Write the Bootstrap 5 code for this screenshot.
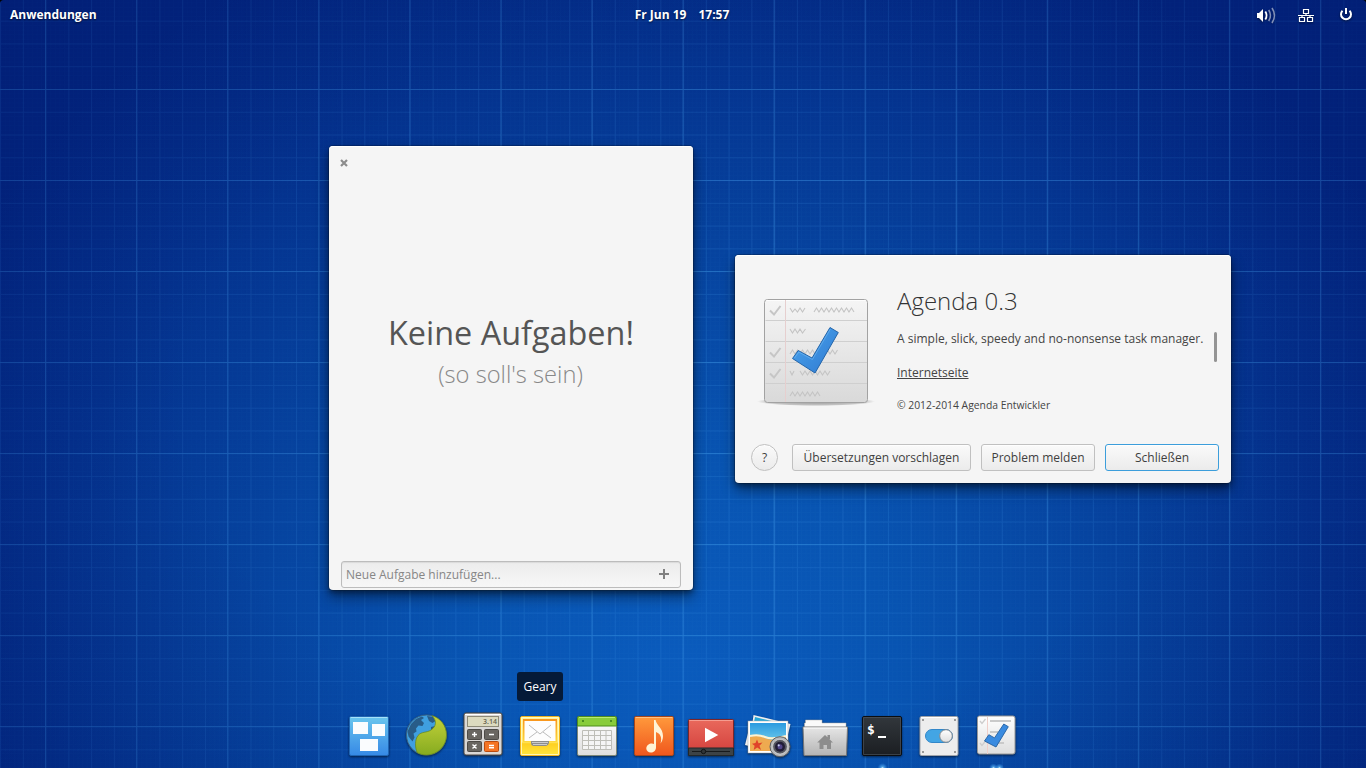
<!DOCTYPE html>
<html lang="de">
<head>
<meta charset="utf-8">
<meta name="viewport" content="width=device-width, initial-scale=1">
<title>Agenda</title>
<link rel="stylesheet" href="https://cdn.jsdelivr.net/npm/bootstrap@5.3.0/dist/css/bootstrap.min.css">
<style>
body{font-family:"Open Sans","Noto Sans",sans-serif;font-size:12px;line-height:16px;color:#444;background:#000}
.desktop{width:1366px;height:768px;border-radius:4px 4px 0 0;background:
 radial-gradient(ellipse 840px 800px at 685px 665px,#0a5bbd 0%,#0854b2 25%,#06439f 52%,#04318d 78%,#022681 100%)}
.desktop::before{content:"";position:absolute;inset:0;border-radius:4px 4px 0 0;background:
 radial-gradient(ellipse 900px 620px at 50% 52%,transparent 55%,rgba(0,8,85,.38) 125%)}
.wallgrid{position:absolute;inset:0;width:1366px;height:768px;-webkit-mask-image:radial-gradient(ellipse 760px 620px at 760px 420px,#000 20%,rgba(0,0,0,.55) 100%);mask-image:radial-gradient(ellipse 760px 620px at 760px 420px,#000 20%,rgba(0,0,0,.55) 100%)}
.topbar{height:30px;padding:0 10px;color:#fff;font-weight:700;text-shadow:0 1px 2px rgba(0,0,0,.6)}
.topbar svg{filter:drop-shadow(0 1px 1px rgba(0,0,0,.5))}
.side{flex:1 1 0}
.clock{margin-right:2px}
.win{position:absolute;background:#f5f5f5;border-radius:4px;box-shadow:0 0 0 1px rgba(0,0,0,.2),0 3px 5px rgba(0,0,0,.32),0 7px 14px rgba(0,0,0,.42),inset 0 1px #fff}
.tasks{left:329px;top:146px;width:364px;height:444px}
.about{left:735px;top:255px;width:496px;height:228px}
.closer{padding:13px 0 0 11px;height:30px;line-height:0}
.empty-state{padding-bottom:38px}
.empty-title{font-size:32.4px;line-height:46px;color:#555}
.empty-sub{font-size:23.7px;line-height:33px;font-weight:300;color:#888;margin-top:3px;margin-right:1px}
.entry{margin:0 12px 2px;height:27px;padding:0 11px 0 4px;border:1px solid #bcbcbc;border-radius:3px;background:linear-gradient(#ececec,#f7f7f7);box-shadow:inset 0 1px 1px rgba(0,0,0,.08);color:#868686}
.entry svg{margin-bottom:2px}
.app-name{font-size:24px;line-height:33px;font-weight:300;color:#333}
.details{padding:29px 0 0 14px}
.summary{margin-top:14px}
.site{margin-top:18px}
.copy{margin-top:17px;font-size:10.35px;line-height:14px}
.thumb{width:3px;height:30px;background:#949494;border-radius:2px;margin:77px 0 0 11px}
.actions{gap:10px;padding:0 12px 12px 16px}
.gbtn{height:27px;border:1px solid #c0c0c0;border-radius:3px;background:linear-gradient(#fafafa,#ebebeb);color:#3f3f3f;font-size:12px;line-height:16px;padding:0;white-space:nowrap;box-shadow:inset 0 1px rgba(255,255,255,.7)}
.gbtn.focused{border-color:#3c9edb}
.help{width:27px;border-radius:50%}
.w-tr{width:179px}.w-mid{width:114px}
.dock{height:68px}
.dock svg{width:57px;height:68px;display:block}
.tip{position:absolute;left:517px;top:672px;width:46px;height:29px;border-radius:3px;background:#051a38;color:#fff}
</style>
</head>
<body class="m-0 overflow-hidden">
<div class="desktop position-relative d-flex flex-column overflow-hidden">
<svg class="wallgrid" aria-hidden="true">
 <defs>
  <pattern id="fine" width="4.55" height="4.55" patternUnits="userSpaceOnUse" x="0.2" y="2.4"><path d="M.5 0V4.55M0 .5H4.55" stroke="#4aa0f0" stroke-opacity=".035" fill="none"/></pattern>
  <pattern id="mid" width="22.77" height="22.77" patternUnits="userSpaceOnUse" x="0" y="20.7"><path d="M.5 0V22.8M0 .5H22.8" stroke="#4aa5f5" stroke-opacity=".15" fill="none"/></pattern>
  <pattern id="major" width="91.07" height="91" patternUnits="userSpaceOnUse" x="45" y="89"><path d="M.5 0V91M0 .5H91.1" stroke="#4aa8f5" stroke-opacity=".32" fill="none"/></pattern>
 </defs>
 <path fill="url(#fine)" d="M0 0h1366v768H0z"/><path fill="url(#mid)" d="M0 0h1366v768H0z"/><path fill="url(#major)" d="M0 0h1366v768H0z"/>
</svg>

<header class="topbar position-relative d-flex align-items-center">
 <div class="side">Anwendungen</div>
 <div class="clock d-flex gap-2"><span class="me-1">Fr Jun 19</span><span>17:57</span></div>
 <div class="side d-flex justify-content-end align-items-center">
  <svg width="110" height="30" viewBox="1246 0 110 30" fill="none">
   <path d="M1257 13h2l4-4v13l-4-4h-2z" fill="#fff"/>
   <path d="M1265.300 11.500q2.600 4 0 8" stroke="#fff" stroke-width="1.800"/>
   <path d="M1268.700 10q3.500 5.500 0 11M1272 8q5 7.500 0 15" stroke="#fff" stroke-opacity=".5" stroke-width="1.600"/>
   <path d="M1303.500 9.500h5v4h-5zM1299.500 17.500h5v4h-5zM1307.500 17.500h5v4h-5zM1306 14v1.500M1302 17v-1M1310 17v-1M1298 15.500h16" stroke="#fff" stroke-width="1.200"/>
   <path d="M1342.500 10.700a5 5 0 1 0 7 0" stroke="#fff" stroke-width="2"/><path d="M1346 8v6" stroke="#fff" stroke-width="2"/>
  </svg>
 </div>
</header>

<main class="flex-grow-1">
<section class="win tasks d-flex flex-column">
 <div class="closer"><svg width="8" height="8" viewBox="0 0 8 8"><path d="M1 1l6 6M7 1L1 7" stroke="#8c8c8c" stroke-width="2.200"/></svg></div>
 <div class="empty-state flex-grow-1 d-flex flex-column align-items-center justify-content-center">
  <div class="empty-title text-nowrap">Keine Aufgaben!</div>
  <div class="empty-sub text-nowrap">(so soll's sein)</div>
 </div>
 <div class="entry d-flex align-items-center justify-content-between"><span>Neue Aufgabe hinzufügen...</span>
  <svg width="10" height="10" viewBox="0 0 10 10"><path d="M5 0v10M0 5h10" stroke="#808080" stroke-width="2"/></svg></div>
</section>

<section class="win about d-flex flex-column">
 <div class="d-flex flex-grow-1 align-items-start">
  <svg width="148" height="185" viewBox="735 255 148 185">
   <defs><linearGradient id="paper" x2="0" y2="1"><stop stop-color="#f5f5f5"/><stop offset="1" stop-color="#d9d9d9"/></linearGradient>
   <linearGradient id="chk" x1="0" y1="0" x2="1" y2="1"><stop stop-color="#4ba7f0"/><stop offset="1" stop-color="#2f78cf"/></linearGradient>
   <radialGradient id="shade"><stop stop-color="#000" stop-opacity=".4"/><stop offset=".8" stop-color="#000" stop-opacity=".2"/><stop offset="1" stop-color="#000" stop-opacity="0"/></radialGradient></defs>
   <ellipse cx="816" cy="401.500" rx="59" ry="4.500" fill="url(#shade)"/>
   <rect x="764.500" y="299.500" width="103" height="103" rx="3" fill="url(#paper)" stroke="#a2a2a2"/>
   <path d="M766 300.500h100" stroke="#fff" stroke-opacity=".8"/>
   <path d="M765.500 320.500h101.500M765.500 341.500h101.500M765.500 362.500h101.500M765.500 383.500h101.500" stroke="#cfcfcf"/>
   <path d="M785.500 300v102" stroke="#e6cfcf"/>
   <path d="M770 310.500l4 4 6.500-8.500M770 352.500l4 4 6.500-8.500M770 373.500l4 4 6.500-8.500" fill="none" stroke="#c6c6c6" stroke-width="2"/>
   <g fill="none" stroke="#c4c4c4" stroke-width="1.100">
    <path d="M790 308l2.500 4 2.500-3 2.500 3 2.500-4 2.500 4 2.500-4M814 312l2.500-4 2.500 4 2.500-4 2.500 4 2.500-4 2.500 4 2.500-4 2.500 4 2.500-4 2.500 4 2.500-4 2.500 4 2.500-4 2.500 4 2.500-4 2.500 4"/>
    <path d="M790 329l2.500 4 2.500-4 2.500 4 2.500-4 2.500 4 3-4"/>
    <path d="M790 354l2.500-4 2.500 4 2.500-4 2.500 4 2.500-4 2.500 4 2.500-4 2.500 4 2.500-4 2.500 4 2.500-4 2.500 4 2.500-4 2.500 4 2.500-4 2.500 4 2.500-4 2.500 4 2.500-4"/>
    <path d="M790 371l2 4 2-4M800 371l2.500 4 2.500-4 2.500 4 2.500-4 2.500 4 2.500-4 2.500 4 2.500-4 2.500 4 2.500-4 2.500 4 2.500-4"/>
    <path d="M790 396l2.500-4 2.500 4 2.500-4 2.500 4 2.500-4 2.500 4 2.500-4 2.500 4 2.500-4 2.500 4 2.500-4 2.500 4"/>
   </g>
   <path d="M792.500 358.500l5.700-8 13.800 7.500 18-30.500 8.300 5-23.300 40.500z" fill="url(#chk)" stroke="#2465aa"/>
   <path d="M794.500 358l4.300-6 13.600 7.500 18-30.500" fill="none" stroke="#7dc3f8" stroke-opacity=".5"/>
  </svg>
  <div class="details text-nowrap">
   <div class="app-name">Agenda 0.3</div>
   <div class="summary">A simple, slick, speedy and no-nonsense task manager.</div>
   <div class="site"><a class="text-reset" href="#">Internetseite</a></div>
   <div class="copy">© 2012-2014 Agenda Entwickler</div>
  </div>
  <div class="thumb"></div>
 </div>
 <div class="actions d-flex align-items-center">
  <button class="gbtn help" type="button">?</button>
  <button class="gbtn w-tr ms-auto" type="button">Übersetzungen vorschlagen</button>
  <button class="gbtn w-mid" type="button">Problem melden</button>
  <button class="gbtn focused w-mid" type="button">Schließen</button>
 </div>
</section>
</main>

<div class="tip d-flex align-items-center justify-content-center">Geary</div>

<footer class="dock position-relative d-flex justify-content-center">
 <svg viewBox="341 700 57 68"><defs>
   <linearGradient id="g1" x2="0" y2="1"><stop stop-color="#6ac6ee"/><stop offset="1" stop-color="#3689e6"/></linearGradient>
   <linearGradient id="gw" x2="0" y2="1"><stop stop-color="#fff"/><stop offset="1" stop-color="#dedede"/></linearGradient>
   <linearGradient id="gy" x2="0" y2="1"><stop stop-color="#fff3a0"/><stop offset=".65" stop-color="#ffe868"/><stop offset=".7" stop-color="#ffd020"/><stop offset="1" stop-color="#ffe640"/></linearGradient>
   <linearGradient id="gy2" x2="0" y2="1"><stop stop-color="#f9941c"/><stop offset="1" stop-color="#ffd83c"/></linearGradient>
   <linearGradient id="go" x2="0" y2="1"><stop stop-color="#ff9a3c"/><stop offset="1" stop-color="#f0571d"/></linearGradient>
   <linearGradient id="gr" x2="0" y2="1"><stop stop-color="#e9695c"/><stop offset="1" stop-color="#d13d3a"/></linearGradient>
   <linearGradient id="gk" x2="0" y2="1"><stop stop-color="#32373c"/><stop offset="1" stop-color="#1b1e22"/></linearGradient>
   <linearGradient id="gf" x2="0" y2="1"><stop stop-color="#e6e6e6"/><stop offset="1" stop-color="#b4b4b4"/></linearGradient>
   <linearGradient id="gg" x2="0" y2="1"><stop stop-color="#c3d23a"/><stop offset="1" stop-color="#86ab20"/></linearGradient>
   <linearGradient id="gs" x2="0" y2="1"><stop stop-color="#2a9be0"/><stop offset="1" stop-color="#8fe0f0"/></linearGradient>
   <radialGradient id="lamp"><stop stop-color="#dff6ff"/><stop offset=".3" stop-color="#67bdf8" stop-opacity=".7"/><stop offset="1" stop-color="#3da0f5" stop-opacity="0"/></radialGradient>
   <filter id="sh" x="-20%" y="-20%" width="140%" height="140%" color-interpolation-filters="sRGB"><feDropShadow dx="0" dy="1" stdDeviation="1" flood-opacity=".55"/></filter></defs>
  <g filter="url(#sh)"><rect x="349.500" y="716.500" width="39" height="39" rx="1.500" fill="url(#g1)" stroke="#1f65b3"/><path d="M350.500 717.500h37" stroke="#a5e2fa"/>
  <g fill="#fafcfe"><rect x="353" y="722" width="15" height="12"/><rect x="372" y="724" width="13" height="12"/><rect x="360" y="739" width="18" height="12"/></g></g></svg>

 <svg viewBox="398 700 57 68"><g filter="url(#sh)"><circle cx="426.500" cy="735" r="20" fill="#3f9fe0" stroke="#3b6585"/>
  <path d="M411 724l5-5 6-2.500 2 1.500-3 2 3 3-1.500 3-4-.5-2.500 3 .5 3-3 2 1 4-2 4-4-5-1-5zM427 716l6 1 2.500 4-3 2-3.500-2zM431 727l4-1-1 3-3 1z" fill="#285c88"/>
  <path d="M432 715.700c8.500 2.300 14.500 10 14.500 19.300 0 11-9 20-20 20-3.500 0-6.500-.8-9.300-2.300-2.400-5.500-2.400-13 .8-17.200 3.500-4.200 8.500-2.500 13-5.500 5.500-3.600 6-9.500 1-14.300z" fill="url(#gg)" stroke="#64841a" stroke-width=".7"/></g></svg>

 <svg viewBox="455 700 57 68"><g filter="url(#sh)"><rect x="464" y="713" width="38" height="42" rx="2" fill="#dad8d6" stroke="#4c4743"/><path d="M465 714.500h36" stroke="#fff"/>
  <rect x="467.500" y="716.500" width="31" height="10" fill="#dcdabf" stroke="#8c8977"/>
  <g fill="#696661" stroke="#4d4a46"><rect x="467.500" y="729.500" width="14" height="10" rx="1"/><rect x="484.500" y="729.500" width="14" height="10" rx="1"/><rect x="467.500" y="741.500" width="14" height="10" rx="1"/><rect x="484.500" y="741.500" width="14" height="10" rx="1" fill="#f57423" stroke="#b94b0f"/></g></g>
  <text x="497" y="724.300" text-anchor="end" font-size="7" font-weight="600" fill="#65624f">3.14</text>
  <path d="M472 734.500h5M474.500 732v5M489 734.500h5M472.500 744.500l4 4M476.500 744.500l-4 4M489 745.500h5M489 747.700h5" stroke="#fff" stroke-width="1.400"/></svg>

 <svg viewBox="512 700 57 68"><g filter="url(#sh)"><rect x="520.500" y="716.500" width="39" height="39" rx="1.500" fill="url(#gy)" stroke="#f0b21c"/><path d="M521.500 717.500v37h37v-37z" fill="none" stroke="#fffbc5" stroke-opacity=".85"/>
  <rect x="523" y="719" width="34" height="23" fill="url(#gy2)"/><path d="M524.500 721h31v20h-7.500q-1 3-3 3h-10q-2 0-3-3h-7.500z" fill="#fdfdfd"/>
  <path d="M529 725l11 9 11-9M529 738l8-6M551 738l-8-6" fill="none" stroke="#bcbcbc"/><path d="M531 741h18v2q-1 3-3 3h-12q-3 0-3-3z" fill="#8d8d8d"/><path d="M532 742.500h16M533 744.500h14" stroke="#ccc"/></g></svg>

 <svg viewBox="569 700 57 68"><g filter="url(#sh)"><rect x="577.500" y="716.500" width="39" height="39" rx="1.500" fill="url(#gw)" stroke="#7b8677"/><path d="M577.500 726v-8q0-1.500 1.500-1.500h36q1.500 0 1.500 1.500v8z" fill="#88cc3b" stroke="#4f8d1c"/><path d="M579 717.500h36" stroke="#b8eb70"/>
  <path d="M582 721h2M610 721h2" stroke="#4b8e21" stroke-width="2"/><path d="M582.500 730.500h29v19h-29zM582.500 735.500h29M582.500 740.500h29M582.500 745.500h29M588.500 730v20M594.500 730v20M600.500 730v20M606 730v20" fill="#f5f5f5" stroke="#bebeb8"/></g></svg>

 <svg viewBox="626 700 57 68"><g filter="url(#sh)"><rect x="634.500" y="716.500" width="39" height="39" rx="1.500" fill="url(#go)" stroke="#a8461a"/><path d="M635.500 717.500h37" stroke="#ffc080"/>
  <path d="M654 720h1.600c.6 5 7.400 8 7.400 16 0 3-1 5.500-2.500 7.500 2-6.500-.5-10-4.500-11.500v15.500c0 3-2.500 5-5.200 5-2.600 0-4.500-1.700-4.500-4 0-3 2.700-5 5.600-5 .8 0 1.500.2 2.100.5z" fill="#fff3d5"/></g></svg>

 <svg viewBox="683 700 57 68"><g filter="url(#sh)"><rect x="688.500" y="719.500" width="45" height="36" rx="1" fill="url(#gr)" stroke="#7d2529"/><path d="M689.500 720.500h43" stroke="#f59c90"/><path d="M688.500 748h45v7.500h-45z" fill="#3d4346" stroke="#23282a"/>
  <path d="M705 727.700l13.300 7.300-13.300 7.300z" fill="#fff"/><path d="M692 751.500h38" stroke="#181b1d"/><circle cx="703.500" cy="751.500" r="2.200" fill="#303537" stroke="#121517"/></g></svg>

 <svg viewBox="740 700 57 68"><g filter="url(#sh)"><path d="M753.500 715l37 9-6 25-35-5z" fill="#eee"/><path d="M755 717l33 8-3 10-32-8z" fill="#25a7d8"/><path d="M750 725l-5 20 8 2z" fill="#eee"/>
  <rect x="748" y="721" width="40" height="32" fill="#fff" stroke="#a3a6a8" stroke-width=".5"/><path d="M750 723h36v28h-36z" fill="url(#gs)"/><path d="M750 737q8-3 15 1t21-1v14h-36z" fill="#eeaa50"/><path d="M750 736q8-2 15 1t21-1" stroke="#fff3d0" stroke-width="2" fill="none"/>
  <path d="M757 739.500l1.500 3.700 4-.7-3 3.200 1.500 4.300-3.800-2.500-3.500 2.500.9-4.200-2.600-2 3.500-.8z" fill="#e0432a"/>
  <circle cx="780" cy="746.700" r="10" fill="#b8babc" stroke="#5a5c60"/><circle cx="780" cy="746.700" r="7.300" fill="#55575f" stroke="#e5e5e5" stroke-width=".6"/><circle cx="780" cy="746.700" r="5" fill="#211d36"/><circle cx="780" cy="746.700" r="2.500" fill="#51458a"/><circle cx="778.700" cy="745.300" r="1.100" fill="#c8cdf0"/></g></svg>

 <svg viewBox="797 700 57 68"><g filter="url(#sh)"><path d="M804.500 728v-5h1v-3h16.500v3h24v5z" fill="#fafafa" stroke="#b0b0b0" stroke-width=".5"/><path d="M803 727h44.500l-1 28.500h-42.500z" fill="url(#gf)" stroke="#777"/><path d="M803.500 728h43.500" stroke="#fff"/>
  <path d="M825 735l8 7.500h-2v6.500h-4v-4h-3.500v4h-4v-6.500h-2.300zM827.500 735h2.500v4h-2.500z" fill="#8d8d8d"/></g></svg>

 <svg viewBox="854 700 57 68"><g filter="url(#sh)"><rect x="862.500" y="716.500" width="39" height="39" rx="1.500" fill="url(#gk)" stroke="#0b0d10"/><path d="M863.500 717.500h37v37h-37z" stroke="#505860" stroke-opacity=".6" fill="none"/></g>
  <text x="867" y="734" font-family="DejaVu Sans Mono" font-size="13" font-weight="700" fill="#fff">$</text><path d="M878 737h8" stroke="#fff" stroke-width="2"/><circle cx="882.500" cy="768" r="5" fill="url(#lamp)"/></svg>

 <svg viewBox="911 700 57 68"><g filter="url(#sh)"><rect x="920" y="716.500" width="38" height="39" rx="1.500" fill="#ededed" stroke="#a0a4aa"/><path d="M921 717.500h36" stroke="#fff"/>
  <path d="M922 720h2M954 720h2M922 752h2M954 752h2" stroke="#9a9a9a" stroke-width="2"/><rect x="925.500" y="729.500" width="27" height="13" rx="6.500" fill="#43a5e4" stroke="#3287c9"/><circle cx="946" cy="736" r="6.300" fill="url(#gw)" stroke="#85888c"/></g></svg>

 <svg viewBox="968 700 57 68"><g filter="url(#sh)"><rect x="977.500" y="716" width="37.500" height="38" rx="2" fill="url(#gw)" stroke="#999"/><path d="M987.500 717v37" stroke="#efcfca"/><path d="M990 721h21M990 732h8M990 743h14" stroke="#cacaca" stroke-width="2"/><path d="M980 721l2 2.500 3.500-4.500M980 743l2 2.500 3.500-4.500" fill="none" stroke="#cdcdcd" stroke-width="1.300"/>
  <path d="M984.500 741l4.300-6.300 5.700 3.200 9.300-13.900 4.500 2.700-12.300 20.300z" fill="#3a8be0" stroke="#2260a0" stroke-width=".9"/></g>
  <circle cx="993.500" cy="768" r="4.500" fill="url(#lamp)"/><circle cx="999.500" cy="768" r="4.500" fill="url(#lamp)"/></svg>
</footer>
</div>
<script src="https://cdn.jsdelivr.net/npm/bootstrap@5.3.0/dist/js/bootstrap.bundle.min.js"></script>
</body>
</html>
